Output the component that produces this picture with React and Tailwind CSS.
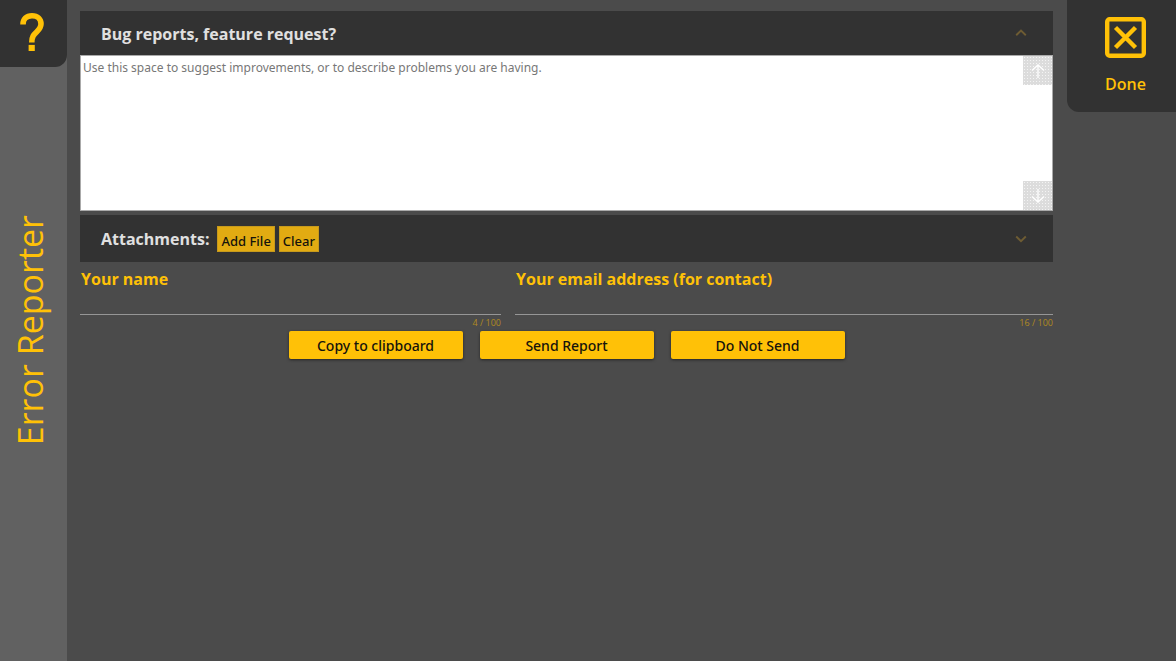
import React from "react";

function Chevron({ down = false }) {
  return (
    <svg viewBox="0 0 12 8" className="h-2 w-3" fill="none" stroke="#6e5c33" strokeWidth="1.9" aria-hidden="true">
      <path d={down ? "M1.2 1.5 6 6.2 10.8 1.5" : "M1.2 6.2 6 1.5 10.8 6.2"} />
    </svg>
  );
}

function ScrollButton({ label, down = false }) {
  return (
    <button
      type="button"
      aria-label={label}
      className="flex h-[29px] w-[29px] items-center justify-center bg-[#dcdcdc] bg-[radial-gradient(#f4f4f4_0.8px,transparent_1px)] bg-[size:3px_3px]"
    >
      <svg viewBox="0 0 14 14" className="h-3.5 w-3.5" fill="none" stroke="#ffffff" strokeWidth="1.3" aria-hidden="true">
        <path d={down ? "M7 0V13M1 7.5 7 13 13 7.5" : "M7 14V1M1 6.5 7 1 13 6.5"} />
      </svg>
    </button>
  );
}

function Field({ id, label, type, count }) {
  return (
    <div className="flex flex-col">
      <label htmlFor={id} className="pl-px text-base leading-6 font-bold text-[#ffc107]">
        {label}
      </label>
      <input
        id={id}
        type={type}
        maxLength={100}
        className="h-6 w-full border-b border-[#969696] bg-transparent px-0.5 text-sm text-white outline-none"
      />
      <span className="self-end text-[9px] leading-4 text-[#b08a22]">{count} / 100</span>
    </div>
  );
}

function ActionButton({ children }) {
  return (
    <button
      type="button"
      className="h-7 w-[174px] rounded-[2px] bg-[#ffc107] pt-0.5 font-['Noto_Sans','Open_Sans',sans-serif] text-sm font-medium text-[#15130c] shadow-[0_1px_3px_rgba(0,0,0,0.5)]"
    >
      {children}
    </button>
  );
}

function FileButton({ children }) {
  return (
    <button
      type="button"
      className="h-[26px] border border-[#c79a1c] bg-[#e2ab12] px-[3px] pt-1 font-['Noto_Sans','Open_Sans',sans-serif] text-[13px] leading-5 font-medium whitespace-nowrap text-[#15130c]"
    >
      {children}
    </button>
  );
}

export default function App() {
  return (
    <div className="flex min-h-screen bg-[#4b4b4b] font-['Open_Sans','Noto_Sans',sans-serif]">
      <aside className="flex w-[67px] shrink-0 flex-col bg-[#616161]">
        <button
          type="button"
          aria-label="Help"
          className="flex h-[67px] w-full items-start justify-center rounded-br-[12px] bg-[#323232] pt-[13px] pr-1"
        >
          <svg viewBox="0 0 24 38" className="h-[38px] w-6" aria-hidden="true">
            <path
              d="M3 11.4C3 6 6.4 2.8 12 2.8s9 3.2 9 8.2c0 3.7-1.8 5.5-4.4 8-3 2.8-4.8 4.6-4.8 10.4"
              fill="none"
              stroke="#ffc107"
              strokeWidth="5.6"
            />
            <path d="M8.6 31.9h6.2v6.1H8.6z" fill="#ffc107" />
          </svg>
        </button>
        <div className="flex flex-1 items-center justify-center pr-2 pb-[67px]">
          <h1 className="rotate-180 text-[34px] leading-[48px] text-[#ffc107] [writing-mode:vertical-rl]">Error Reporter</h1>
        </div>
      </aside>

      <main className="min-w-0 flex-1 pt-[11px] pr-3.5 pl-[13px]">
        <section>
          <header className="flex h-11 items-center justify-between bg-[#323232] pr-[26px] pl-[21px]">
            <h2 className="pt-0.5 text-base font-bold text-[#e0e0e0]">
              <label htmlFor="report">Bug reports, feature request?</label>
            </h2>
            <button type="button" aria-label="Collapse bug reports">
              <Chevron />
            </button>
          </header>
          <div className="flex h-[156px] border border-[#aaaaaa] bg-white">
            <textarea
              id="report"
              className="min-w-0 flex-1 resize-none bg-transparent px-[2px] py-[2px] font-['Noto_Sans','Open_Sans',sans-serif] text-[12px] leading-5 text-[#222222] outline-none placeholder:text-[#777777]"
              placeholder="Use this space to suggest improvements, or to describe problems you are having."
            />
            <div className="flex flex-col justify-between">
              <ScrollButton label="Scroll up" />
              <ScrollButton label="Scroll down" down />
            </div>
          </div>
        </section>

        <section className="mt-1 flex h-[47px] items-center bg-[#323232] pr-[26px] pl-[21px]">
          <h2 className="text-base font-bold text-[#e0e0e0]">Attachments:</h2>
          <div className="ml-2 flex flex-1 gap-1">
            <FileButton>Add File</FileButton>
            <FileButton>Clear</FileButton>
          </div>
          <button type="button" aria-label="Expand attachments">
            <Chevron down />
          </button>
        </section>

        <form className="pt-[5px]" onSubmit={(event) => event.preventDefault()}>
          <div className="grid grid-cols-[421fr_538fr] gap-3.5">
            <Field id="name" label="Your name" type="text" count={4} />
            <Field id="email" label="Your email address (for contact)" type="email" count={16} />
          </div>
          <div className="flex justify-center gap-[17px]">
            <ActionButton>Copy to clipboard</ActionButton>
            <ActionButton>Send Report</ActionButton>
            <ActionButton>Do Not Send</ActionButton>
          </div>
        </form>
      </main>

      <aside className="w-[109px] shrink-0">
        <button
          type="button"
          className="flex h-28 w-full flex-col items-center gap-3 rounded-bl-[12px] bg-[#323232] pt-[17px] pl-2 text-base leading-7 font-semibold text-[#ffc107]"
        >
          <svg viewBox="0 0 41 41" className="h-[41px] w-[41px]" fill="none" stroke="#ffc107" aria-hidden="true">
            <rect x="2.2" y="2.2" width="36.6" height="36.6" rx="2.5" strokeWidth="4.4" />
            <path d="M10.5 10.5 30.5 30.5M30.5 10.5 10.5 30.5" strokeWidth="4.4" />
          </svg>
          Done
        </button>
      </aside>
    </div>
  );
}
